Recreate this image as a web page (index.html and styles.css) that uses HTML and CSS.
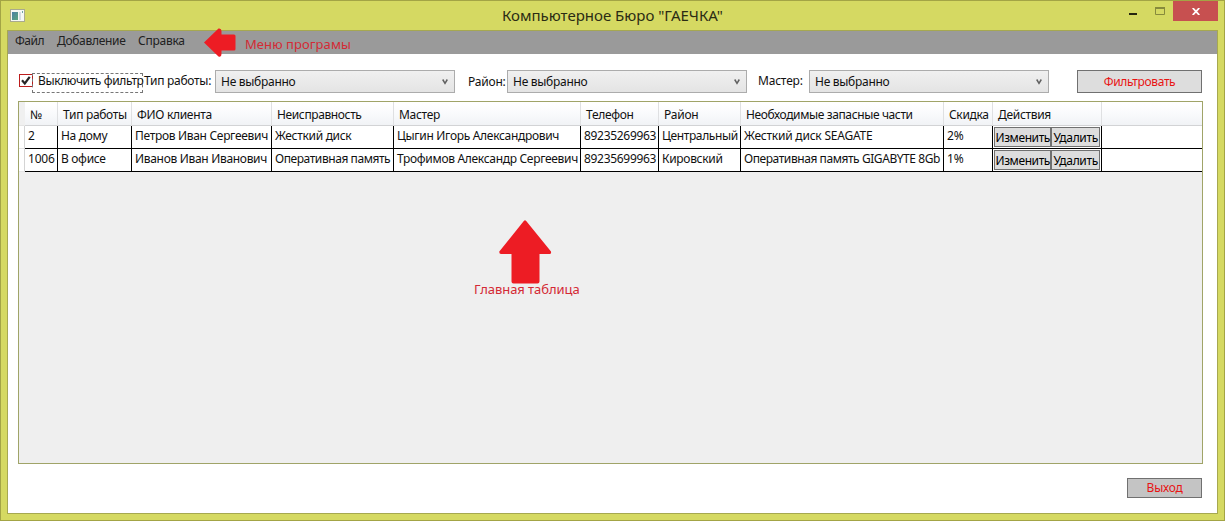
FILE: index.html
```
<!DOCTYPE html>
<html lang="ru">
<head>
<meta charset="utf-8">
<title>Компьютерное Бюро "ГАЕЧКА"</title>
<link rel="stylesheet" href="styles.css">
</head>
<body>
<div class="window">
  <header class="titlebar">
    <svg class="app-icon" width="15" height="13" viewBox="0 0 15 13">
      <defs><linearGradient id="pane" x1="0" y1="0" x2="1" y2="1"><stop offset="0" stop-color="#4a7fa5"/><stop offset="1" stop-color="#5aa67c"/></linearGradient></defs>
      <rect x=".5" y=".5" width="14" height="12" fill="#f6f8f4" stroke="#a9aa8e"/>
      <rect x="2" y="3" width="6" height="8" fill="url(#pane)"/>
      <rect x="9" y="3" width="2" height="8" fill="#d5dce2"/>
      <rect x="12" y="2" width="1" height="2" fill="#6fa5a0"/>
    </svg>
    <h1 class="title">Компьютерное Бюро "ГАЕЧКА"</h1>
    <div class="controls">
      <svg class="minimize" width="8" height="2"><rect width="8" height="2" fill="#26260f"/></svg>
      <svg class="maximize" width="10" height="8" viewBox="0 0 10 8"><path d="M.5 1H9.500V7.500H.5Z" fill="none" stroke="#878a3c"/><path d="M0 1H10" stroke="#878a3c" stroke-width="2"/></svg>
      <span class="close"><svg width="8" height="7" viewBox="0 0 8 7"><path d="M.7 0L7.300 7M7.300 0L.7 7" stroke="#fff" stroke-width="1.800"/></svg></span>
    </div>
  </header>
  <main class="client">
    <nav class="menu">
      <span class="menu-file">Файл</span>
      <span class="menu-add">Добавление</span>
      <span class="menu-help">Справка</span>
      <div class="note note-menu">
        <svg width="32" height="30" viewBox="0 0 32 30"><path d="M0 14.500L14.500.5Q17.500 0 17.500 3V6.500H30Q31.500 6.500 31.500 8V21Q31.500 22.500 30 22.500H17.500V26Q17.500 29.500 14.500 28.500Z" fill="#ed1c24"/></svg>
        <span>Меню програмы</span>
      </div>
    </nav>
    <section class="filters">
      <label class="check">
        <span class="box"><svg width="13" height="12" viewBox="0 0 13 12"><path d="M2 5.200L4.800 8.500L9.700 1.800" fill="none" stroke="#262626" stroke-width="2.200"/></svg></span>
        <span class="check-text tight">Выключить фильтр</span>
      </label>
      <span class="label label-type">Тип работы:</span>
      <div class="combo"><span>Не выбранно</span><svg width="6" height="6" viewBox="0 0 6 6"><path d="M.7 .5L3 4.300L5.300 .5" fill="none" stroke="#606060" stroke-width="1.500"/></svg></div>
      <span class="label label-area">Район:</span>
      <div class="combo"><span>Не выбранно</span><svg width="6" height="6" viewBox="0 0 6 6"><path d="M.7 .5L3 4.300L5.300 .5" fill="none" stroke="#606060" stroke-width="1.500"/></svg></div>
      <span class="label label-master">Мастер:</span>
      <div class="combo"><span>Не выбранно</span><svg width="6" height="6" viewBox="0 0 6 6"><path d="M.7 .5L3 4.300L5.300 .5" fill="none" stroke="#606060" stroke-width="1.500"/></svg></div>
      <button class="apply">Фильтровать</button>
    </section>
    <section class="table">
      <div class="row head">
        <i></i><span>№</span><span>Тип работы</span><span>ФИО клиента</span><span class="tight">Неисправность</span><span>Мастер</span><span>Телефон</span><span class="loose">Район</span><span class="tight">Необходимые запасные части</span><span>Скидка</span><span>Действия</span><span></span>
      </div>
      <div class="row">
        <i></i><span>2</span><span>На дому</span><span>Петров Иван Сергеевич</span><span>Жесткий диск</span><span>Цыгин Игорь Александрович</span><span>89235269963</span><span class="tight">Центральный</span><span class="loose">Жесткий диск SEAGATE</span><span class="loose">2%</span><span class="actions"><button class="edit">Изменить</button><button class="delete">Удалить</button></span><span></span>
      </div>
      <div class="row">
        <i></i><span class="loose">1006</span><span>В офисе</span><span>Иванов Иван Иванович</span><span class="tighter">Оперативная память</span><span>Трофимов Александр Сергеевич</span><span>89235699963</span><span>Кировский</span><span class="tighter">Оперативная память GIGABYTE 8Gb</span><span class="loose">1%</span><span class="actions"><button class="edit">Изменить</button><button class="delete">Удалить</button></span><span></span>
      </div>
      <div class="note note-table">
        <svg width="53" height="64" viewBox="0 0 53 64"><path d="M25 .7Q26 0 27 .7L52 31.500Q52.500 34 50.500 34H40.500V61.500Q40.500 63.500 38.500 63.500H14.500Q12.500 63.500 12.500 61.500V34H2Q0 34 .3 31.500Z" fill="#ed1c24"/></svg>
        <span>Главная таблица</span>
      </div>
    </section>
    <footer class="footer"><button class="exit">Выход</button></footer>
  </main>
</div>
</body>
</html>
```
FILE: styles.css
```
* { box-sizing: border-box; }
body {
  margin: 0;
  font: 12px/16px "Noto Sans", "Open Sans", sans-serif;
  letter-spacing: -0.31px;
  color: #111;
}
button {
  margin: 0;
  padding: 0;
  font: inherit;
  letter-spacing: inherit;
  border: 1px solid #707070;
  background: #ddd;
  white-space: nowrap;
}
svg { display: block; flex: none; }
.tight { letter-spacing: -0.38px; }
.tighter { letter-spacing: -0.43px; }
.loose { letter-spacing: -0.22px; }

.window {
  display: flex;
  flex-direction: column;
  width: 1225px;
  height: 521px;
  padding: 0 6px 6px;
  border: 1px solid #a3a445;
  background: #d5d962;
}
.titlebar { display: flex; height: 29px; }
.app-icon { margin: 8px 0 0 3px; }
.title {
  flex: 1;
  margin: 3px 0 0 477px;
  font-size: 15px;
  font-weight: 400;
  line-height: 22px;
  letter-spacing: 0;
  color: #2b2c14;
}
.controls { display: flex; align-items: flex-start; }
.minimize { margin: 12px 18px 0 0; }
.maximize { margin: 6px 8px 0 0; }
.close {
  display: grid;
  place-items: center;
  width: 45px;
  height: 20px;
  background: #c75050;
}

.client {
  flex: 1;
  display: flex;
  flex-direction: column;
  border: 1px solid #a6a850;
  background: #fff;
}
.menu {
  display: flex;
  height: 23px;
  padding: 2px 0 0 7px;
  background: #9a9a9a;
  color: #212121;
}
.menu-file { width: 42px; letter-spacing: -0.5px; }
.menu-add { width: 81px; }
.menu-help { width: 66px; letter-spacing: -0.25px; }
.note { display: flex; color: #d42a35; font-size: 13px; }
.note-menu { gap: 9px; margin-top: -5px; height: 30px; }
.note-menu span { margin-top: 8px; letter-spacing: 0.08px; }

.filters { display: flex; height: 23px; margin: 16px 0 8px; padding-left: 11px; }
.check { display: flex; width: 125px; height: 20px; margin-top: 3px; }
.box {
  width: 14px;
  height: 13px;
  margin-top: 1px;
  border: 1px solid #bc1c1c;
}
.check-text {
  width: 111px;
  margin-left: -1px;
  padding-left: 5px;
  border: 1px dashed #777;
  line-height: 14px;
  white-space: nowrap;
}
.label { padding-top: 3px; letter-spacing: -0.28px; white-space: nowrap; }
.label-type { width: 71px; }
.label-area { width: 52px; padding-left: 13px; padding-top: 4px; letter-spacing: -0.2px; }
.label-master { width: 62px; padding-left: 11px; letter-spacing: -0.2px; }
.combo {
  display: flex;
  justify-content: space-between;
  width: 240px;
  padding: 3px 6px 0 5px;
  border: 1px solid #acacac;
  background: linear-gradient(#f0f0f0, #e4e4e4);
  letter-spacing: -0.28px;
}
.combo svg { margin-top: 5px; }
.apply { width: 125px; margin-left: 28px; color: #e81414; letter-spacing: -0.36px; }

.table {
  height: 363px;
  margin: 0 14px 0 10px;
  border: 1px solid #a0a468;
  background: #efefef;
}
.row {
  display: grid;
  grid-template-columns: 6px 33px 74px 140px 122px 187px 78px 82px 203px 49px 109px 1fr;
  height: 23px;
  background: #fff;
}
.row > i { border-right: 1px solid #d4d4d4; border-bottom: 1px solid #e4e4e4; }
.row > span {
  padding: 2px 0 0 3px;
  border-right: 1px solid #000;
  border-bottom: 1px solid #000;
  white-space: nowrap;
}
.row > span:last-child { border-right: 0; }
.head { height: 24px; background: linear-gradient(#fff 10%, #f9fafc 50%, #f0f2f5); }
.head > i { border-right-color: #f0f0f0; background: #f0f0f0; }
.head > span { padding: 5px 0 0 5px; border-right-color: #dfe0e2; border-bottom-color: #d2d3d5; }
.row > .actions { display: flex; padding: 1px; }
.edit { width: 58px; letter-spacing: -0.4px; }
.delete { width: 49px; }
.actions button { padding-top: 2px; line-height: 16px; }
.note-table { flex-direction: column; width: 120px; margin: 48px 0 0 455px; }
.note-table svg { margin-left: 25px; }
.note-table span { margin-top: -3px; letter-spacing: -0.05px; }

.footer { display: flex; justify-content: flex-end; padding: 14px 15px 0 0; }
.exit { width: 75px; height: 20px; background: #c4c4c4; color: #e81414; letter-spacing: -0.25px; }
```
